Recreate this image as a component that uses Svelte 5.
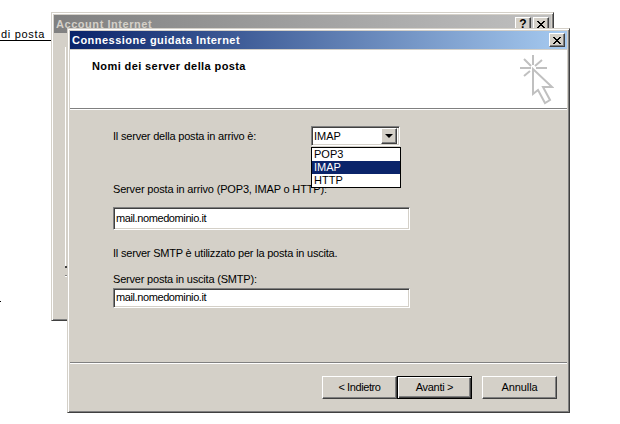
<script>
  const items = ['POP3', 'IMAP', 'HTTP'];
  const selected = 'IMAP';
  const closeGlyph = 'M0 0h2v1h-2zM6 0h2v1h-2zM1 1h2v1h-2zM5 1h2v1h-2zM2 2h4v1h-4zM3 3h2v1h-2zM2 4h4v1h-4zM1 5h2v1h-2zM5 5h2v1h-2zM0 6h2v1h-2zM6 6h2v1h-2z';
</script>

<div class="desktop">
  <span class="bg-text">di posta</span>
  <span class="bg-rule"></span>
  <span class="bg-dot"></span>

  <section class="window back">
    <header class="title back-title">
      <span>Account Internet</span>
      <div class="caps">
        <button class="cap help">?</button>
        <button class="cap">
          <svg width="8" height="7" viewBox="0 0 8 7" shape-rendering="crispEdges"><path d={closeGlyph} /></svg>
        </button>
      </div>
    </header>
    <div class="back-body">
      <span class="tab-edge"></span>
      <span class="tick dark"></span>
      <span class="tick light"></span>
    </div>
  </section>

  <section class="window front">
    <header class="title front-title">
      <span>Connessione guidata Internet</span>
      <button class="cap">
        <svg width="8" height="7" viewBox="0 0 8 7" shape-rendering="crispEdges"><path d={closeGlyph} /></svg>
      </button>
    </header>

    <div class="head">
      <h1>Nomi dei server della posta</h1>
      <svg class="wizard-icon" width="36" height="52" viewBox="0 0 36 52" fill="none" stroke="#c0c0c0" stroke-width="2">
        <path d="M15 2v10M2 15h11M18 15h11M6 6l7 7M24 7l-7 6M6 23l6-5" />
        <path d="M15 16v25l5-4 7 13 5-3-7-13h9z" />
      </svg>
    </div>

    <div class="content">
      <div class="row">
        <span class="label">Il server della posta in arrivo è:</span>
        <div class="combo">
          <span class="combo-value">{selected}</span>
          <span class="combo-btn"><i></i></span>
          <ul class="list">
            {#each items as item}
              <li class:active={item === selected}>{item}</li>
            {/each}
          </ul>
        </div>
      </div>

      <p class="l1">Server posta in arrivo (POP3, IMAP o HTTP):</p>
      <div class="field tall">mail.nomedominio.it</div>
      <p class="l2">Il server SMTP è utilizzato per la posta in uscita.</p>
      <p class="l3">Server posta in uscita (SMTP):</p>
      <div class="field">mail.nomedominio.it</div>
    </div>

    <footer class="foot">
      <button class="btn back-btn">&lt; Indietro</button>
      <button class="btn default">Avanti &gt;</button>
      <button class="btn cancel">Annulla</button>
    </footer>
  </section>
</div>

<style>
  :global(body) {
    margin: 0;
    background: #fff;
  }
  .desktop {
    position: relative;
    width: 620px;
    height: 424px;
    overflow: hidden;
    background: #fff;
    font: 11px/13px "Liberation Sans", Arial, sans-serif;
    color: #000;
  }
  .bg-text {
    position: absolute;
    left: 1px;
    top: 28px;
    letter-spacing: 0.7px;
  }
  .bg-rule {
    position: absolute;
    left: 0;
    top: 40px;
    width: 51px;
    height: 1px;
    background: #000;
  }
  .bg-dot {
    position: absolute;
    left: 0;
    top: 301px;
    width: 1px;
    height: 1px;
    background: #000;
  }
  .window {
    position: absolute;
    box-sizing: border-box;
    display: flex;
    flex-direction: column;
    background: #d4d0c8;
    padding: 1px;
    border: 1px solid;
    border-color: #d4d0c8 #404040 #404040 #d4d0c8;
    box-shadow: inset 1px 1px 0 #fff, inset -1px -1px 0 #808080;
  }
  .back {
    left: 51px;
    top: 12px;
    width: 503px;
    height: 309px;
  }
  .front {
    left: 67px;
    top: 28px;
    width: 503px;
    height: 385px;
  }
  .title {
    height: 18px;
    margin: 1px 1px 0;
    flex: none;
    display: flex;
    align-items: center;
    justify-content: space-between;
    padding: 0 2px;
    font-weight: 700;
    letter-spacing: 0.48px;
    color: #fff;
  }
  .back-title {
    background: linear-gradient(90deg, #808080, #c0c0c0);
    color: #d4d0c8;
    letter-spacing: 0.55px;
  }
  .front-title {
    background: linear-gradient(90deg, #0a246a, #a6caf0);
  }
  .caps {
    display: flex;
    gap: 2px;
  }
  .cap {
    box-sizing: border-box;
    width: 16px;
    height: 14px;
    padding: 0;
    margin: 0;
    display: flex;
    align-items: center;
    justify-content: center;
    background: #d4d0c8;
    border: 1px solid;
    border-color: #fff #404040 #404040 #fff;
    box-shadow: inset -1px -1px 0 #808080;
    font: 700 12px/12px "Liberation Sans", sans-serif;
    color: #000;
  }
  .back-body {
    position: relative;
    flex: 1;
  }
  .tab-edge {
    position: absolute;
    left: 12px;
    top: 14px;
    bottom: 53px;
    width: 1px;
    background: #fff;
  }
  .tick {
    position: absolute;
    left: 12px;
    width: 2px;
    height: 1px;
  }
  .tick.dark {
    top: 233px;
    height: 2px;
    background: #404040;
  }
  .tick.light {
    top: 242px;
    background: #808080;
    box-shadow: 0 1px 0 #fff;
  }
  .head {
    position: relative;
    flex: none;
    height: 58px;
    margin: 1px 1px 0;
    background: #fff;
    border-bottom: 1px solid #808080;
    box-shadow: 0 1px 0 #fff;
  }
  h1 {
    margin: 0;
    padding: 10px 0 0 22px;
    font: 700 11px/13px "Liberation Sans", sans-serif;
    letter-spacing: 0.4px;
  }
  .wizard-icon {
    position: absolute;
    right: 13px;
    top: 3px;
  }
  .content {
    flex: 1;
    padding: 16px 0 0 44px;
    margin-top: 1px;
  }
  .row {
    display: flex;
    align-items: center;
    gap: 54px;
    height: 20px;
  }
  .label {
    width: 144px;
    white-space: nowrap;
    letter-spacing: -0.2px;
  }
  .combo {
    position: relative;
    box-sizing: border-box;
    width: 89px;
    height: 20px;
    padding: 2px;
    display: flex;
    align-items: center;
    justify-content: space-between;
    background: #fff;
    border: 1px solid;
    border-color: #808080 #fff #fff #808080;
    box-shadow: inset 1px 1px 0 #404040, inset -1px -1px 0 #d4d0c8;
  }
  .combo-btn {
    box-sizing: border-box;
    width: 16px;
    height: 16px;
    display: flex;
    align-items: center;
    justify-content: center;
    background: #d4d0c8;
    border: 1px solid;
    border-color: #fff #404040 #404040 #fff;
    box-shadow: inset -1px -1px 0 #808080;
  }
  .combo-btn i {
    display: block;
    width: 0;
    height: 0;
    border-left: 4px solid transparent;
    border-right: 4px solid transparent;
    border-top: 4px solid #000;
  }
  .list {
    position: absolute;
    left: -1px;
    top: 20px;
    box-sizing: border-box;
    width: 90px;
    height: 41px;
    margin: 0;
    padding: 0;
    list-style: none;
    background: #fff;
    border: 1px solid #000;
  }
  .list li {
    height: 13px;
    padding-left: 2px;
  }
  .list .active {
    background: #0a246a;
    color: #fff;
  }
  p {
    margin: 0;
    white-space: nowrap;
  }
  .l1 { margin-top: 37px; letter-spacing: -0.17px; }
  .l2 { margin-top: 17px; letter-spacing: -0.2px; }
  .l3 { margin-top: 13px; margin-bottom: 2px; letter-spacing: -0.2px; }
  .l1 + .field { margin-top: 11px; }
  .field {
    box-sizing: border-box;
    width: 297px;
    height: 20px;
    padding: 2px 0 0 2px;
    background: #fff;
    border: 1px solid;
    border-color: #808080 #fff #fff #808080;
    box-shadow: inset 1px 1px 0 #404040, inset -1px -1px 0 #d4d0c8;
    letter-spacing: -0.4px;
  }
  .field.tall {
    height: 23px;
    padding-top: 4px;
  }
  .foot {
    flex: none;
    height: 48px;
    box-sizing: border-box;
    margin: 0 1px 1px;
    padding: 13px 10px 0 0;
    display: flex;
    justify-content: flex-end;
    border-top: 1px solid #808080;
    box-shadow: inset 0 1px 0 #fff;
  }
  .btn {
    box-sizing: border-box;
    width: 75px;
    height: 23px;
    margin: 0;
    padding: 0;
    background: #d4d0c8;
    border: 1px solid;
    border-color: #fff #404040 #404040 #fff;
    box-shadow: inset -1px -1px 0 #808080;
    font: 11px/13px "Liberation Sans", sans-serif;
    color: #000;
  }
  .back-btn { letter-spacing: -0.4px; }
  .btn.default {
    border: 1px solid #000;
    box-shadow: inset 1px 1px 0 #fff, inset -1px -1px 0 #404040, inset -2px -2px 0 #808080;
    letter-spacing: -0.3px;
  }
  .btn.cancel {
    margin-left: 10px;
    letter-spacing: -0.1px;
  }
</style>
